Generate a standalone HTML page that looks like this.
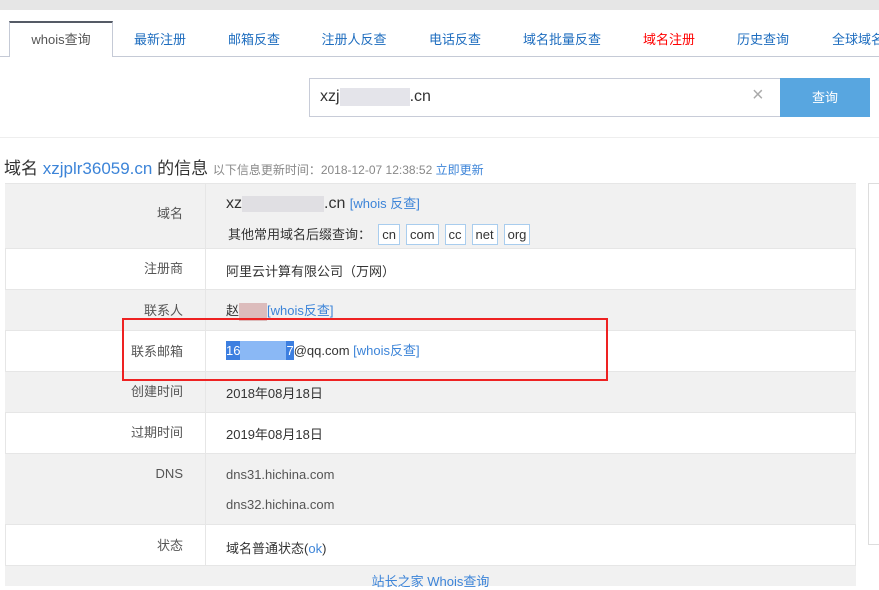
<!DOCTYPE html>
<html><head><meta charset="utf-8"><style>
*{margin:0;padding:0;box-sizing:border-box}
body{width:879px;height:580px;overflow:hidden;background:#fff;font-family:"Liberation Sans","Noto Sans CJK SC",sans-serif;font-size:13px;color:#333;position:relative}
.a{position:absolute}
.tab{position:absolute;top:21px;height:36px;line-height:38px;font-size:13px;color:#1e6dbf;text-align:center}
a{color:#3c84d8;text-decoration:none}
.row{position:absolute;left:5px;width:851px;border-bottom:1px solid #e6e6e6}
.lab{position:absolute;left:0;width:201px;height:100%;border-right:1px solid #e6e6e6;text-align:right;padding-right:22px;color:#555}
.val{position:absolute;left:221px;color:#333}
.g{background:#f1f1f1}
.sfx{display:inline-block;border:1px solid #a9cdee;background:#fff;padding:0 3px;height:21px;line-height:19px;margin-right:6px;color:#333}
</style></head><body>
<div class="a" style="left:0;top:0;width:879px;height:10px;background:#e6e6e6"></div>
<div class="a" style="left:0;top:56px;width:879px;height:1px;background:#c5cad6"></div>
<div class="a" style="left:9px;top:21px;width:104px;height:36px;background:#fff;border:1px solid #c5cad6;border-top:2px solid #555b66;border-bottom:none"></div>
<div class="tab" style="left:9px;width:104px;color:#555">whois查询</div>
<div class="tab" style="left:128px;width:64px">最新注册</div>
<div class="tab" style="left:222px;width:64px">邮箱反查</div>
<div class="tab" style="left:316px;width:76px">注册人反查</div>
<div class="tab" style="left:423px;width:64px">电话反查</div>
<div class="tab" style="left:518px;width:88px">域名批量反查</div>
<div class="tab" style="left:637px;width:64px;color:#f00">域名注册</div>
<div class="tab" style="left:731px;width:64px">历史查询</div>
<div class="tab" style="left:826px;width:64px">全球域名</div>
<div class="a" style="left:309px;top:78px;width:472px;height:39px;border:1px solid #c8ccd8"></div>
<div class="a" style="left:320px;top:88px;font-size:16px;color:#333">xzj<span style="display:inline-block;width:70px;height:18px;background:#e4e4ea;vertical-align:middle"></span>.cn</div>
<div class="a" style="left:752px;top:84px;font-size:20px;color:#aaa">×</div>
<div class="a" style="left:780px;top:78px;width:90px;height:39px;background:#58a6e0;color:#fff;text-align:center;line-height:39px;font-size:13px">查询</div>
<div class="a" style="left:0;top:137px;width:879px;height:1px;background:#eee"></div>
<div class="a" style="left:4px;top:154px;font-size:17px;color:#333;white-space:nowrap">域名 <a>xzjplr36059.cn</a> 的信息 <span style="font-size:12px;color:#888">以下信息更新时间：2018-12-07 12:38:52 <a>立即更新</a></span></div>
<div class="a" style="left:868px;top:183px;width:11px;height:362px;border-left:1px solid #ddd;border-top:1px solid #ddd;border-bottom:1px solid #ddd"></div>
<div class="a" style="left:5px;top:183px;width:851px;height:400px;border-top:1px solid #e6e6e6;border-left:1px solid #e6e6e6;border-right:1px solid #e6e6e6"></div>
<div class="row g" style="top:184px;height:65px"><div class="lab" style="line-height:60px">域名</div>
<div class="val" style="top:9px;font-size:16px">xz<span style="display:inline-block;width:82px;height:16px;background:#e0dfe3;vertical-align:middle"></span>.cn <a style="font-size:13px">[whois 反查]</a></div>
<div class="val" style="top:40px;font-size:13px;left:223px">其他常用域名后缀查询： &nbsp;<span class="sfx">cn</span><span class="sfx">com</span><span class="sfx">cc</span><span class="sfx">net</span><span class="sfx">org</span></div></div>
<div class="row" style="top:249px;height:41px"><div class="lab" style="line-height:40px">注册商</div><div class="val" style="top:12px">阿里云计算有限公司（万网）</div></div>
<div class="row g" style="top:290px;height:41px"><div class="lab" style="line-height:42px">联系人</div><div class="val" style="top:10px">赵<span style="display:inline-block;width:28px;height:18px;background:#dcbcbc;vertical-align:middle"></span><a>[whois反查]</a></div></div>
<div class="row" style="top:331px;height:41px"><div class="lab" style="line-height:42px">联系邮箱</div><div class="val" style="top:9px"><span style="background:#3d7fe0;color:#fff;display:inline-block;height:19px;line-height:19px">16<span style="display:inline-block;width:46px;height:19px;background:#8ab8f5;vertical-align:top"></span>7</span>@qq.com <a>[whois反查]</a></div></div>
<div class="row g" style="top:372px;height:41px"><div class="lab" style="line-height:40px">创建时间</div><div class="val" style="top:11px">2018年08月18日</div></div>
<div class="row" style="top:413px;height:41px"><div class="lab" style="line-height:40px">过期时间</div><div class="val" style="top:11px">2019年08月18日</div></div>
<div class="row g" style="top:454px;height:71px"><div class="lab" style="line-height:40px">DNS</div><div class="val" style="top:6px;line-height:30px;color:#555">dns31.hichina.com<br>dns32.hichina.com</div></div>
<div class="row" style="top:525px;height:41px"><div class="lab" style="line-height:42px">状态</div><div class="val" style="top:13px">域名普通状态(<a>ok</a>)</div></div>
<div class="row g" style="top:566px;height:20px;border:none"><div style="text-align:center;color:#3c84d8;margin-top:5px">站长之家 Whois查询</div></div>
<div class="a" style="left:122px;top:318px;width:486px;height:63px;border:2px solid #ee2222"></div>
</body></html>
